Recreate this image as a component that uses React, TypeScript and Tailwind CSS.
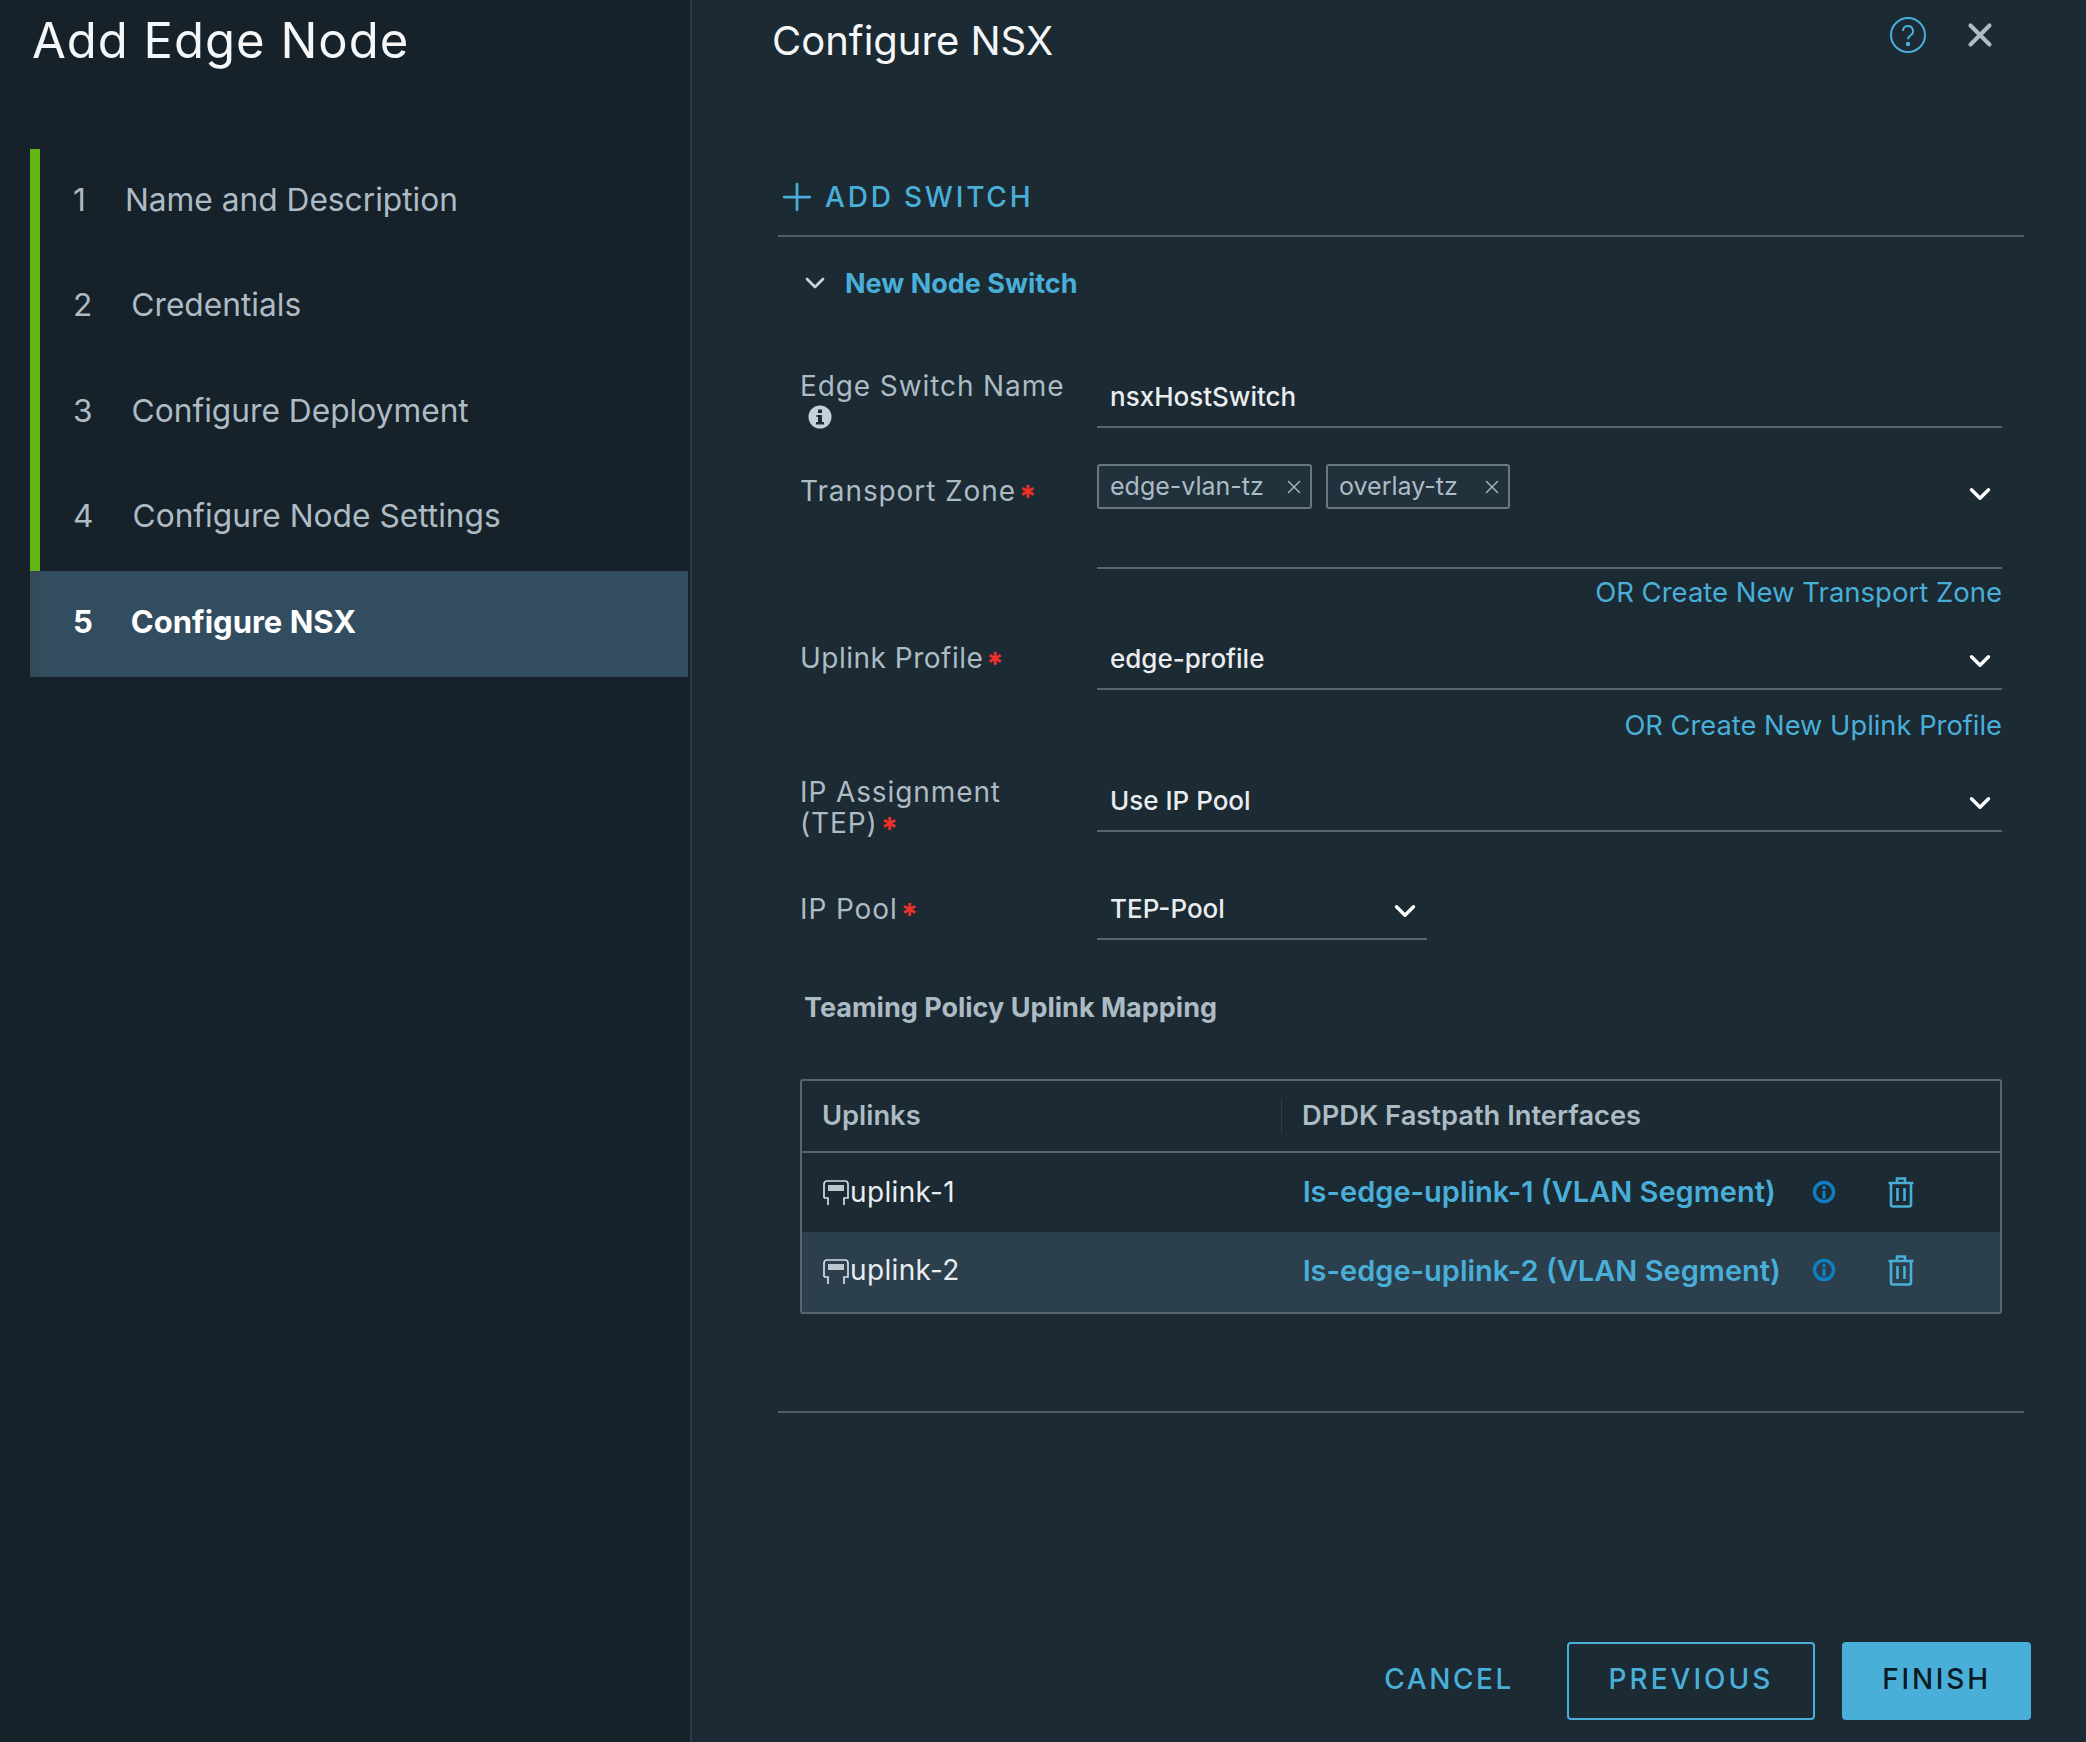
import React from 'react';
import { ChevronDown, Plus, X } from 'lucide-react';

const steps = [
  { n: 1, label: 'Name and Description' },
  { n: 2, label: 'Credentials' },
  { n: 3, label: 'Configure Deployment' },
  { n: 4, label: 'Configure Node Settings' },
];

const Required = () => <span className="ml-[3px] align-[-7px] text-[31px] leading-none font-bold text-[#f0302a]">*</span>;

const InfoIcon = () => (
  <svg width="26" height="26" viewBox="0 0 26 26">
    <circle cx="13" cy="13" r="11.5" fill="#c5d0d8" />
    <rect x="11" y="5.5" width="4" height="3.5" fill="#1b2a33" />
    <path d="M9.5 11h5.5v7h2v2.5H9v-2.5h2v-5H9.5z" fill="#1b2a33" />
  </svg>
);

const SmallInfo = () => (
  <svg width="24" height="24" viewBox="0 0 24 24">
    <circle cx="12" cy="12" r="9.5" fill="none" stroke="#0f7fc0" strokeWidth="3.4" />
    <path d="M12 6v3M12 10.5v8" stroke="#0f7fc0" strokeWidth="3.2" />
  </svg>
);

const TrashIcon = () => (
  <svg width="28" height="32" viewBox="0 0 28 32" fill="none" stroke="#49afd9" strokeWidth="2.6">
    <path d="M1.5 7h25M10 7V2.5h8V7M4 7v21.5a2 2 0 0 0 2 2h16a2 2 0 0 0 2-2V7M10.5 12v13M17.5 12v13" />
  </svg>
);

const UplinkIcon = () => (
  <svg width="28" height="26" viewBox="0 0 28 26" fill="none" stroke="#d5dde2" strokeWidth="1.7" className="mt-[3px] shrink-0">
    <path d="M2 18V4a3 3 0 0 1 3-3h18a3 3 0 0 1 3 3v14h-4v7M2 18h4v7" />
    <rect x="6" y="5" width="16" height="6" fill="#bcc7ce" stroke="none" />
  </svg>
);

const Chevron = () => <ChevronDown size={34} strokeWidth={2.4} className="text-white shrink-0" />;

const FieldLabel = ({ children }: { children: React.ReactNode }) => (
  <div className="w-[297px] shrink-0 text-[28px] leading-[31px] tracking-[0.9px] text-[#adbbc4]">{children}</div>
);

const SelectValue = ({ value }: { value: string }) => (
  <div className="flex h-[58px] flex-1 items-start justify-between border-b-2 border-[#56656f] pt-[12px] pr-[5px] pl-[13px]">
    <span className="text-[26px] leading-[30px] font-medium text-[#eaedf0]">{value}</span>
    <Chevron />
  </div>
);

const Chip = ({ label, width }: { label: string; width: string }) => (
  <div className={`flex h-[45px] items-center justify-between rounded-[3px] border-2 border-[#6b7780] bg-[#21323c] pr-[5px] pl-[11px] ${width}`}>
    <span className="text-[25px] leading-none text-[#adbbc4]">{label}</span>
    <X size={22} strokeWidth={1.5} className="text-[#adbbc4]" />
  </div>
);

const UplinkRow = ({ name, segment, shaded }: { name: string; segment: string; shaded?: boolean }) => (
  <div className={`flex items-center ${shaded ? 'h-[80px] bg-[#2b3f4d] pb-[4px]' : 'h-[79px] pb-[2px]'}`}>
    <div className="flex w-[479px] items-center pl-[20px]">
      <UplinkIcon />
      <span className="text-[28px] leading-none tracking-[0.35px] text-[#eaedf0]">{name}</span>
    </div>
    <div className="w-[531px] pl-[22px] text-[29px] leading-none font-semibold whitespace-nowrap text-[#49afd9]">{segment}</div>
    <SmallInfo />
    <div className="ml-[51px]">
      <TrashIcon />
    </div>
  </div>
);

export default function App() {
  return (
    <div className="flex h-[1742px] w-[2086px] overflow-hidden bg-[#1b2a33] font-['Inter',sans-serif]">
      <aside className="flex h-full w-[692px] shrink-0 flex-col border-r-2 border-[#2b3a44] bg-[#16212a] pl-[30px]">
        <div className="flex h-[82px] items-center pb-[2px] pl-[2px] text-[49px] leading-none tracking-[1px] text-[#f4f6f7]">Add Edge Node</div>
        <div className="mt-[67px] w-[658px]">
          {steps.map((s) => (
            <div key={s.n} className="flex h-[105.5px] items-center gap-[39px] border-l-[10px] border-[#62b714] pb-[4px] pl-[33px] text-[31.7px] leading-none text-[#adbbc4]">
              <span>{s.n}</span>
              <span>{s.label}</span>
            </div>
          ))}
          <div className="flex h-[105.5px] items-center gap-[38px] border-l-[10px] border-[#324a5a] bg-[#324d60] pb-[4px] pl-[33px] text-[31px] leading-none font-bold text-white">
            <span>5</span>
            <span>Configure NSX</span>
          </div>
        </div>
      </aside>

      <main className="flex h-full flex-1 flex-col pr-[62px] pl-[86px]">
        <div className="flex h-[82px] items-center justify-between">
          <h1 className="-ml-[6px] text-[40px] leading-none text-[#f4f6f7]">Configure NSX</h1>
          <div className="mr-[25px] mb-[12px] flex items-center gap-[34px]">
            <svg width="38" height="38" viewBox="0 0 38 38" fill="none" stroke="#49afd9" strokeWidth="2">
              <circle cx="19" cy="19" r="17" />
              <path d="M14 15a5 5 0 1 1 7.5 4.3c-1.6 1-2.5 2-2.5 4" />
              <circle cx="19" cy="28" r="1.2" fill="#49afd9" />
            </svg>
            <X size={38} strokeWidth={2.6} className="text-[#adbbc4]" />
          </div>
        </div>

        <div className="mt-[84px] flex h-[71px] items-start border-b-2 border-[#4d5c67] pt-[9px]">
          <Plus size={44} strokeWidth={1.5} className="-ml-[3px] shrink-0 text-[#49afd9]" />
          <span className="mt-[3px] ml-[6px] text-[28px] leading-[38px] font-medium tracking-[2.8px] text-[#49afd9]">ADD SWITCH</span>
        </div>

        <div className="flex h-[92px] items-center gap-[14px] pl-[21px]">
          <ChevronDown size={32} strokeWidth={2} className="text-[#c9d4db]" />
          <span className="text-[27px] leading-none font-bold text-[#49afd9]">New Node Switch</span>
        </div>

        <div className="mt-[41px] pr-[22px] pl-[22px]">
          <div className="flex h-[58px]">
            <div className="pt-[1px]">
              <FieldLabel>
                Edge Switch Name
                <div className="mt-[2px] ml-[7px]">
                  <InfoIcon />
                </div>
              </FieldLabel>
            </div>
            <div className="flex-1 border-b-2 border-[#56656f] pt-[12px] pl-[13px] text-[26px] leading-[30px] font-medium text-[#eaedf0]">nsxHostSwitch</div>
          </div>

          <div className="flex h-[141px]">
            <div className="pt-[48px]">
              <FieldLabel>
                Transport Zone
                <Required />
              </FieldLabel>
            </div>
            <div className="flex flex-1 items-start gap-[14px] border-b-2 border-[#56656f] pt-[36px] pr-[5px]">
              <Chip label="edge-vlan-tz" width="w-[215px]" />
              <Chip label="overlay-tz" width="w-[184px]" />
              <div className="mt-[13px] ml-auto">
                <Chevron />
              </div>
            </div>
          </div>
          <div className="mt-[8px] text-right text-[27.5px] leading-[30px] text-[#49afd9]">OR Create New Transport Zone</div>

          <div className="mt-[25px] flex h-[58px]">
            <div className="pt-[11px]">
              <FieldLabel>
                <span className="tracking-[0.5px]">Uplink Profile</span>
                <Required />
              </FieldLabel>
            </div>
            <SelectValue value="edge-profile" />
          </div>
          <div className="mt-[21px] text-right text-[27.3px] leading-[30px] text-[#49afd9]">OR Create New Uplink Profile</div>

          <div className="mt-[33px] flex h-[58px]">
            <div className="pt-[3px]">
              <FieldLabel>
                IP Assignment
                <br />
                (TEP)
                <Required />
              </FieldLabel>
            </div>
            <SelectValue value="Use IP Pool" />
          </div>

          <div className="mt-[50px] flex h-[58px]">
            <div className="pt-[12px]">
              <FieldLabel>
                IP Pool
                <Required />
              </FieldLabel>
            </div>
            <div className="flex w-[330px]">
              <SelectValue value="TEP-Pool" />
            </div>
          </div>

          <div className="mt-[53px] pl-[4px] text-[27px] leading-[30px] font-bold text-[#adbbc4]">Teaming Policy Uplink Mapping</div>

          <div className="mt-[56px] rounded-[3px] border-2 border-[#56656f]">
            <div className="flex h-[72px] items-center border-b-2 border-[#56656f] text-[27.3px] leading-none font-semibold text-[#adbbc4]">
              <div className="w-[479px] pl-[20px]">Uplinks</div>
              <div className="flex h-[36px] items-center border-l border-[#2f3f4a] pl-[20px]">DPDK Fastpath Interfaces</div>
            </div>
            <UplinkRow name="uplink-1" segment="ls-edge-uplink-1 (VLAN Segment)" />
            <UplinkRow name="uplink-2" segment="ls-edge-uplink-2 (VLAN Segment)" shaded />
          </div>
        </div>

        <div className="mt-[97px] border-b-2 border-[#4d5c67]" />

        <div className="-mr-[7px] mt-auto mb-[22px] flex items-center justify-end text-[28px] leading-none font-medium">
          <span className="mr-[-1px] pb-[5px] tracking-[2.6px] text-[#49afd9]">CANCEL</span>
          <div className="ml-[54px] flex h-[78px] w-[248px] items-center justify-center rounded-[4px] border-2 border-[#49afd9] pb-[4px] tracking-[3px] text-[#49afd9]">PREVIOUS</div>
          <div className="ml-[27px] flex h-[78px] w-[189px] items-center justify-center rounded-[4px] bg-[#49afd9] pb-[4px] tracking-[2.8px] text-[#0a1a24]">FINISH</div>
        </div>
      </main>
    </div>
  );
}
